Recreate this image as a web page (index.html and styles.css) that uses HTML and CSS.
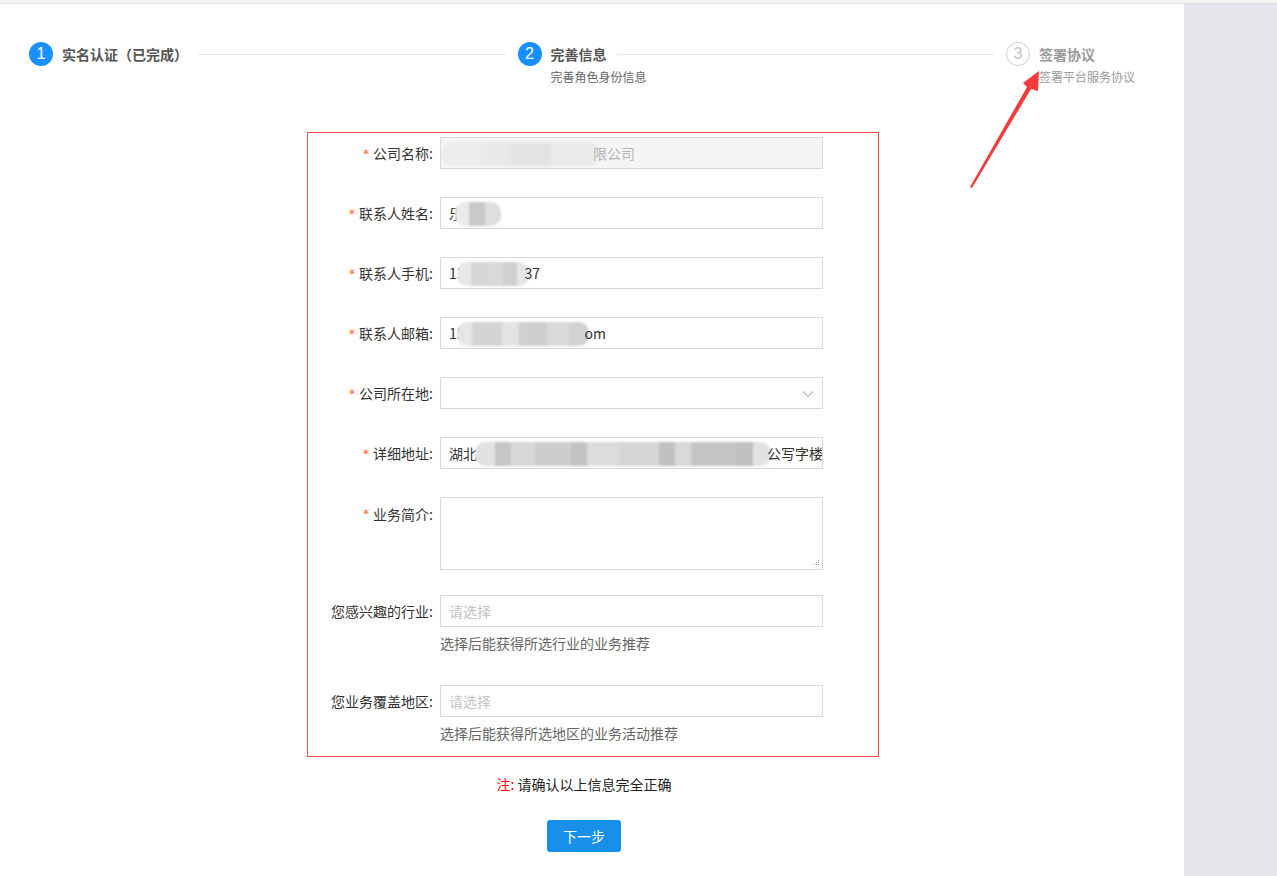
FILE: index.html
```html
<!DOCTYPE html>
<html lang="zh-CN">
<head>
<meta charset="utf-8">
<title>完善信息</title>
<link rel="stylesheet" href="styles.css">
</head>
<body>
<div class="topbar"></div>
<div class="layout">
  <main class="main">
    <div class="steps">
      <div class="step step-done">
        <div class="step-icon">1</div>
        <div class="step-content">
          <div class="step-head"><span class="step-title">实名认证（已完成）</span><span class="step-tail"></span></div>
        </div>
      </div>
      <div class="step step-active">
        <div class="step-icon">2</div>
        <div class="step-content">
          <div class="step-head"><span class="step-title">完善信息</span><span class="step-tail"></span></div>
          <div class="step-desc">完善角色身份信息</div>
        </div>
      </div>
      <div class="step step-wait step-last">
        <div class="step-icon">3</div>
        <div class="step-content">
          <div class="step-head"><span class="step-title">签署协议</span></div>
          <div class="step-desc">签署平台服务协议</div>
        </div>
      </div>
    </div>

    <div class="form-box">
      <div class="form-item">
        <div class="form-label"><span class="req">*</span>公司名称:</div>
        <div class="form-control">
          <div class="input input-disabled"><span class="blur blur-company"></span><span class="after-blur">限公司</span></div>
        </div>
      </div>
      <div class="form-item">
        <div class="form-label"><span class="req">*</span>联系人姓名:</div>
        <div class="form-control">
          <div class="input">乐<span class="blur blur-name"></span></div>
        </div>
      </div>
      <div class="form-item">
        <div class="form-label"><span class="req">*</span>联系人手机:</div>
        <div class="form-control">
          <div class="input">13<span class="blur blur-phone"></span><span class="after-blur">37</span></div>
        </div>
      </div>
      <div class="form-item">
        <div class="form-label"><span class="req">*</span>联系人邮箱:</div>
        <div class="form-control">
          <div class="input">15<span class="blur blur-email"></span><span class="after-blur">om</span></div>
        </div>
      </div>
      <div class="form-item">
        <div class="form-label"><span class="req">*</span>公司所在地:</div>
        <div class="form-control">
          <div class="input select">
            <svg class="chevron" width="12" height="8" viewBox="0 0 12 8"><path d="M1 1.5 L6 6.5 L11 1.5" fill="none" stroke="#bfbfbf" stroke-width="1.2"/></svg>
          </div>
        </div>
      </div>
      <div class="form-item">
        <div class="form-label"><span class="req">*</span>详细地址:</div>
        <div class="form-control">
          <div class="input">湖北<span class="blur blur-address"></span><span class="after-blur">公写字楼</span></div>
        </div>
      </div>
      <div class="form-item form-item-textarea">
        <div class="form-label"><span class="req">*</span>业务简介:</div>
        <div class="form-control">
          <div class="textarea">
            <svg class="grip" width="8" height="8" viewBox="0 0 8 8"><g fill="#9a9a9a"><rect x="6" y="1" width="1" height="1"/><rect x="4" y="3" width="1" height="1"/><rect x="6" y="3" width="1" height="1"/><rect x="2" y="5" width="1" height="1"/><rect x="4" y="5" width="1" height="1"/><rect x="6" y="5" width="1" height="1"/></g></svg>
          </div>
        </div>
      </div>
      <div class="form-item form-item-extra">
        <div class="form-label">您感兴趣的行业:</div>
        <div class="form-control">
          <div class="input placeholder">请选择</div>
          <div class="form-extra">选择后能获得所选行业的业务推荐</div>
        </div>
      </div>
      <div class="form-item form-item-extra form-item-last">
        <div class="form-label">您业务覆盖地区:</div>
        <div class="form-control">
          <div class="input placeholder">请选择</div>
          <div class="form-extra">选择后能获得所选地区的业务活动推荐</div>
        </div>
      </div>
    </div>

    <div class="actions">
      <p class="note"><span class="note-mark">注:</span> 请确认以上信息完全正确</p>
      <button class="btn-primary" type="button">下一步</button>
    </div>
  </main>
  <aside class="side"></aside>
</div>

<svg class="arrow" width="1277" height="876" viewBox="0 0 1277 876">
  <polygon points="970,187 1027,87 1023,83 1039,71 1038,91 1031,89 972,188" fill="#f43b3b"/>
</svg>
</body>
</html>
```

FILE: styles.css
```css
* { box-sizing: border-box; }

html, body {
  margin: 0;
  padding: 0;
  background: #fff;
}

body {
  font-family: "Noto Sans CJK SC", "Noto Sans", "Liberation Sans", sans-serif;
  font-size: 14px;
  color: #333;
  width: 1277px;
  height: 876px;
  overflow: hidden;
  position: relative;
}

.topbar {
  height: 4px;
  background: #f3f3f3;
  border-bottom: 1px solid #dedede;
}

.layout {
  display: flex;
  height: 872px;
}

.main {
  width: 1184px;
  padding: 38px 49px 0 29px;
  background: #fff;
}

.side {
  flex: 1;
  background: #e4e5ea;
}

/* Steps */
.steps {
  display: flex;
}

.step {
  flex: 1;
  display: flex;
  align-items: flex-start;
  padding-left: 12px;
}

.step:first-child { padding-left: 0; }

.step-last { flex: none; }

.step-icon {
  width: 24px;
  height: 24px;
  border-radius: 50%;
  flex: none;
  text-align: center;
  line-height: 24px;
  font-size: 16px;
  font-family: "Liberation Sans", "Noto Sans", sans-serif;
  background: #1890ff;
  color: #fff;
}

.step-wait .step-icon {
  background: #fff;
  border: 1px solid #cfcfcf;
  color: #c4c4c4;
  line-height: 22px;
}

.step-content {
  flex: 1;
  margin-left: 9px;
}

.step-head {
  display: flex;
  align-items: center;
  height: 24px;
}

.step-title {
  font-size: 14px;
  font-weight: bold;
  color: #555;
  white-space: nowrap;
  line-height: 24px;
}

.step-wait .step-title { color: #9a9a9a; }

.step-tail {
  flex: 1;
  height: 1px;
  background: #e8e8e8;
  margin-left: 10px;
}

.step-desc {
  font-size: 12px;
  line-height: 22px;
  color: #666;
  white-space: nowrap;
}

.step-wait .step-desc { color: #9a9a9a; }

/* Form */
.form-box {
  width: 572px;
  margin: 44px 0 0 278px;
  border: 1px solid #f2494b;
  padding: 4px 0 12px;
}

.form-item {
  display: flex;
  margin-bottom: 28px;
}

.form-item-textarea { margin-bottom: 25px; }
.form-item-extra { margin-bottom: 31px; }
.form-item-last { margin-bottom: 0; }

.form-label {
  width: 125px;
  height: 32px;
  margin-right: 7px;
  text-align: right;
  line-height: 32px;
  font-size: 14px;
  color: #333;
  white-space: nowrap;
}

.form-item-textarea .form-label { line-height: 34px; }

.req {
  display: inline-block;
  color: #f5622d;
  font-size: 12px;
  line-height: 0;
  margin-right: 4px;
  font-family: "DejaVu Sans", sans-serif;
  vertical-align: top;
  position: relative;
  top: 17px;
}

.form-control {
  width: 383px;
}

.input {
  position: relative;
  height: 32px;
  border: 1px solid #d9d9d9;
  padding: 0 8px;
  line-height: 30px;
  font-size: 14px;
  color: #333;
  white-space: nowrap;
  overflow: hidden;
  background: #fff;
}

.input-disabled {
  background: #f5f5f5;
  color: #b5b5b5;
}

.placeholder { color: #c4c4c4; }

.chevron {
  position: absolute;
  right: 8px;
  top: 12px;
}

.textarea {
  position: relative;
  height: 73px;
  border: 1px solid #d9d9d9;
  background: #fff;
}

.grip {
  position: absolute;
  right: 2px;
  bottom: 2px;
}

.form-extra {
  margin-top: 5px;
  line-height: 22px;
  font-size: 14px;
  color: #666;
  white-space: nowrap;
}

/* Mosaic blurs over private data */
.blur {
  display: inline-block;
  vertical-align: middle;
  height: 24px;
  border-radius: 10px;
  position: relative;
  top: -1px;
  filter: blur(1px);
}

.after-blur {
  position: relative;
}

.blur-company {
  width: 158px;
  margin-left: -8px;
  margin-right: -6px;
  background:
    linear-gradient(90deg, #ededed 0 40px, #e9e9e9 40px 70px, #e4e4e4 70px 110px, #eaeaea 110px 158px);
}

.blur-name {
  width: 46px;
  margin-left: -8px;
  background:
    linear-gradient(90deg, #ebebeb 0 14px, #c9c9c9 14px 30px, #dedede 30px 46px);
}

.blur-phone {
  width: 72px;
  margin-left: -8px;
  margin-right: -4px;
  background:
    linear-gradient(90deg, #e8e8e8 0 14px, #d6d6d6 14px 30px, #d9d9d9 30px 46px, #cfcfcf 46px 60px, #e6e6e6 60px 72px);
}

.blur-email {
  width: 132px;
  margin-left: -8px;
  margin-right: -4px;
  background:
    linear-gradient(90deg, #e6e6e6 0 15px, #d4d4d4 15px 45px, #e3e3e3 45px 62px, #cfcfcf 62px 90px, #dadada 90px 112px, #d2d2d2 112px 132px);
}

.blur-address {
  width: 296px;
  margin-left: -2px;
  margin-right: -4px;
  background:
    linear-gradient(90deg, #e2e2e2 0 20px, #c6c6c6 20px 36px, #d8d8d8 36px 60px, #cdcdcd 60px 96px, #c3c3c3 96px 112px, #dcdcdc 112px 144px, #d6d6d6 144px 184px, #c1c1c1 184px 200px, #d9d9d9 200px 216px, #c5c5c5 216px 262px, #c1c1c1 262px 278px, #e2e2e2 278px 296px);
}

/* Actions */
.actions {
  padding-left: 4px;
  text-align: center;
}

.note {
  margin: 16px 0 0;
  line-height: 22px;
  font-size: 14px;
  color: #222;
}

.note-mark { color: #f00; }

.btn-primary {
  margin-top: 25px;
  width: 74px;
  height: 32px;
  border: 0;
  border-radius: 3px;
  background: #188fe8;
  color: #fff;
  font-family: inherit;
  font-size: 14px;
  padding: 0;
  cursor: pointer;
}

.arrow {
  position: absolute;
  left: 0;
  top: 0;
  pointer-events: none;
}
```
